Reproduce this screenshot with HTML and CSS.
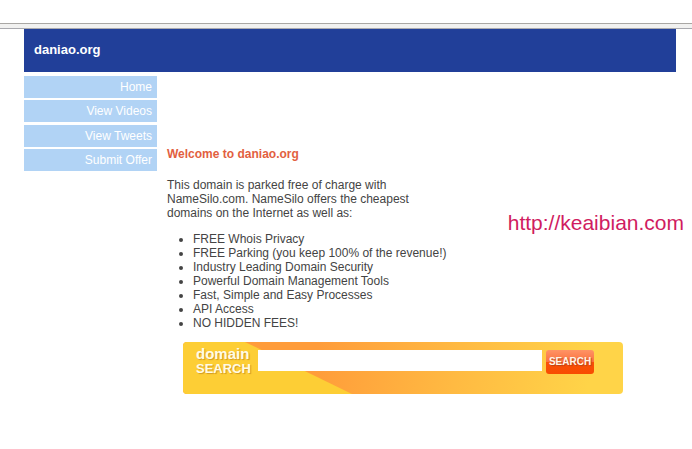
FILE: index.html
```html
<!DOCTYPE html>
<html lang="en">
<head>
<meta charset="utf-8">
<title>daniao.org</title>
<link rel="stylesheet" href="styles.css">
</head>
<body>
<div class="divider"></div>
<div class="page">
  <header class="header">daniao.org</header>
  <div class="columns">
    <nav class="nav">
      <a href="#">Home</a>
      <a href="#">View Videos</a>
      <a href="#">View Tweets</a>
      <a href="#">Submit Offer</a>
    </nav>
    <main class="content">
      <h1>Welcome to daniao.org</h1>
      <p>This domain is parked free of charge with NameSilo.com. NameSilo offers the cheapest domains on the Internet as well as:</p>
      <ul>
        <li>FREE Whois Privacy</li>
        <li>FREE Parking (you keep 100% of the revenue!)</li>
        <li>Industry Leading Domain Security</li>
        <li>Powerful Domain Management Tools</li>
        <li>Fast, Simple and Easy Processes</li>
        <li>API Access</li>
        <li>NO HIDDEN FEES!</li>
      </ul>
      <form class="search">
        <svg class="search-shape" viewBox="0 0 170 52" aria-hidden="true"><path d="M0 0H62L169 52H0Z" fill="#fdce35"/></svg>
        <label for="domain"><span class="label-top">domain</span><span>SEARCH</span></label>
        <input id="domain" type="text">
        <button type="button">SEARCH</button>
      </form>
    </main>
  </div>
</div>
<a class="watermark" href="#">http://keaibian.com</a>
</body>
</html>
```

FILE: styles.css
```css
* { box-sizing: border-box; }

body {
  margin: 0;
  background: #fff;
  color: #444;
  font: 12px/14px "Liberation Sans", Arial, sans-serif;
}

a { text-decoration: none; }

.divider {
  height: 6px;
  margin-top: 23px;
  background: #f1f1f0;
  border-top: 1px solid #a9a7a4;
  border-bottom: 1px solid #a9a9ae;
}

.page {
  margin: 0 16px 0 24px;
}

.header {
  padding: 13px 10px 14px;
  background: #213f99;
  color: #fff;
  font-size: 13px;
  font-weight: bold;
  line-height: 16px;
}

.columns {
  display: flex;
  gap: 10px;
  padding-top: 4px;
}

.nav {
  display: flex;
  flex: 0 0 133px;
  flex-direction: column;
  align-self: flex-start;
  justify-content: space-between;
  min-height: 95px;
}

.nav a {
  padding: 0 5px;
  background: #b1d3f5;
  color: #fff;
  line-height: 22px;
  text-align: right;
}

.content {
  flex: 1;
  min-width: 0;
  padding-top: 71px;
}

h1 {
  margin: 0 0 17px;
  color: #e2603f;
  font-size: 12px;
  line-height: 14px;
}

p {
  max-width: 260px;
  margin: 0 0 12px;
}

ul {
  margin: 0 0 12px;
  padding-left: 26px;
}

.search {
  position: relative;
  display: flex;
  align-items: flex-start;
  max-width: 440px;
  height: 52px;
  margin-left: 16px;
  padding: 4px 29px 0 13px;
  overflow: hidden;
  border-radius: 4px;
  background: linear-gradient(100deg, #ff9c3a 30%, #ffba42 62%, #ffd448 92%);
}

.search-shape {
  position: absolute;
  top: 0;
  left: 0;
  width: 170px;
  height: 52px;
}

.search label {
  position: relative;
  display: flex;
  flex: 0 0 62px;
  flex-direction: column;
  color: #fffbe6;
  font-size: 13px;
  font-weight: bold;
  line-height: 15px;
  text-shadow: 1px 1px 1px #d29a22;
}

.search .label-top {
  font-size: 15px;
}

.search input {
  position: relative;
  flex: 1;
  min-width: 0;
  height: 21px;
  margin: 4px 4px 0 0;
  padding: 0 4px;
  border: 0;
  background: #fff;
  font: inherit;
}

.search button {
  position: relative;
  flex: 0 0 48px;
  height: 24px;
  margin-top: 4px;
  padding: 0;
  border: 0;
  border-radius: 3px;
  background: linear-gradient(#ff9365, #fb7340 48%, #f95008 52%, #f84c00);
  color: #fff5e8;
  font-family: inherit;
  font-size: 10px;
  font-weight: bold;
  line-height: 24px;
  text-shadow: 1px 1px 1px #b84317;
}

.watermark {
  position: absolute;
  top: 211px;
  right: 8px;
  color: #d01c60;
  font-size: 21px;
  line-height: 24px;
}
```
